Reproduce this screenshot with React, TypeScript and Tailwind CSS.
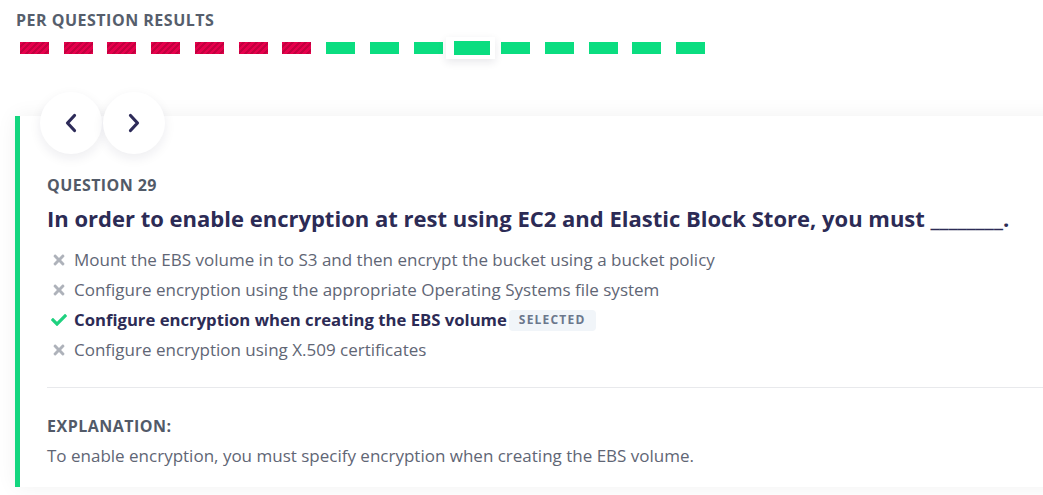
import React from "react";
import { FaTimes, FaCheck } from "react-icons/fa";

type R = "wrong" | "right";
const results: R[] = [
  "wrong", "wrong", "wrong", "wrong", "wrong", "wrong", "wrong",
  "right", "right", "right", "right", "right", "right", "right", "right", "right",
];
const ACTIVE = 10;

const options = [
  { text: "Mount the EBS volume in to S3 and then encrypt the bucket using a bucket policy", correct: false, selected: false },
  { text: "Configure encryption using the appropriate Operating Systems file system", correct: false, selected: false },
  { text: "Configure encryption when creating the EBS volume", correct: true, selected: true },
  { text: "Configure encryption using X.509 certificates", correct: false, selected: false },
];

function Bar({ r, active }: { r: R; active: boolean }) {
  const cls =
    r === "wrong"
      ? "bg-[repeating-linear-gradient(135deg,#e6004c_0px,#e6004c_2.5px,#c4003f_2.5px,#c4003f_4.5px)]"
      : "bg-[#0add80]";
  if (active) {
    return (
      <div className="relative w-[43.75px] h-[22px] flex items-center justify-center">
        <div className="absolute left-[-4px] top-0 w-[49px] h-[22px] bg-white shadow-[0_3px_8px_rgba(30,30,60,0.10)]" />
        <div className={`relative w-[36px] h-[14px] ${cls}`} />
      </div>
    );
  }
  return (
    <div className="w-[43.75px] h-[22px] flex items-center justify-center">
      <div className={`w-[29px] h-[12px] ${cls}`} />
    </div>
  );
}

function Chevron({ dir }: { dir: "left" | "right" }) {
  return (
    <svg width="12" height="20" viewBox="0 0 12 20" fill="none">
      <polyline
        points={dir === "left" ? "9.5,2.5 2.5,10 9.5,17.5" : "2.5,2.5 9.5,10 2.5,17.5"}
        stroke="#2d2b59"
        strokeWidth="3.2"
        strokeLinecap="round"
        strokeLinejoin="round"
      />
    </svg>
  );
}

export default function App() {
  return (
    <div className="w-[1043px] h-[495px] overflow-hidden bg-white font-['Open_Sans',sans-serif]">
      <div className="pt-[9px] pl-[16px]">
        <h3 className="text-[16px] leading-[22px] font-bold tracking-[0.5px] uppercase text-[#565e6c]">
          Per Question Results
        </h3>
      </div>
      <div className="mt-[6px] pl-[12.6px] flex">
        {results.map((r, i) => (
          <Bar key={i} r={r} active={i === ACTIVE} />
        ))}
      </div>

      <div className="mt-[57px] ml-[15px] w-[1060px] flex flex-col border-l-[5px] border-[#13d67f] bg-white shadow-[0_0_20px_rgba(0,0,0,0.06)] pl-[27px] pb-[18px]">
        <div className="-mt-[24px] -ml-[7px] flex gap-[1px]">
          <button className="w-[62px] h-[62px] rounded-full bg-white shadow-[0_4px_12px_rgba(30,30,60,0.08)] flex items-center justify-center">
            <Chevron dir="left" />
          </button>
          <button className="w-[62px] h-[62px] rounded-full bg-white shadow-[0_4px_12px_rgba(30,30,60,0.08)] flex items-center justify-center">
            <Chevron dir="right" />
          </button>
        </div>

        <div className="mt-[20px] text-[16px] leading-[22px] font-bold tracking-[0.4px] uppercase text-[#525a68]">
          Question 29
        </div>
        <h2 className="mt-[7px] text-[22px] leading-[30px] font-bold text-[#2c2b55] whitespace-nowrap">
          In order to enable encryption at rest using EC2 and Elastic Block Store, you must ________.
        </h2>

        <ul className="mt-[12px]">
          {options.map((o, i) => (
            <li key={i} className="h-[30px] flex items-center pl-[5px]">
              <span className="w-[13px] flex items-center justify-center">
                {o.correct ? (
                  <FaCheck className="text-[#1fd17f] shrink-0" size={16} />
                ) : (
                  <FaTimes className="text-[#aeb2ba] shrink-0" size={16} />
                )}
              </span>
              <span
                className={
                  o.correct
                    ? "ml-[9px] text-[16.7px] font-bold text-[#2c2b55] whitespace-nowrap"
                    : "ml-[9px] text-[17px] text-[#5f6675] whitespace-nowrap"
                }
              >
                {o.text}
              </span>
              {o.selected && (
                <span className="ml-[2px] h-[21px] px-[10px] flex items-center rounded-[4px] bg-[#f1f5f9] text-[12px] font-bold tracking-[1.2px] uppercase text-[#6b778c]">
                  Selected
                </span>
              )}
            </li>
          ))}
        </ul>

        <div className="mt-[22px] border-t border-[#e8e9ec]" />

        <div className="mt-[27px] text-[16px] leading-[22px] font-bold tracking-[0.5px] uppercase text-[#525a68]">
          Explanation:
        </div>
        <p className="mt-[6px] text-[17px] leading-[26px] text-[#5f6675]">
          To enable encryption, you must specify encryption when creating the EBS volume.
        </p>
      </div>
    </div>
  );
}
